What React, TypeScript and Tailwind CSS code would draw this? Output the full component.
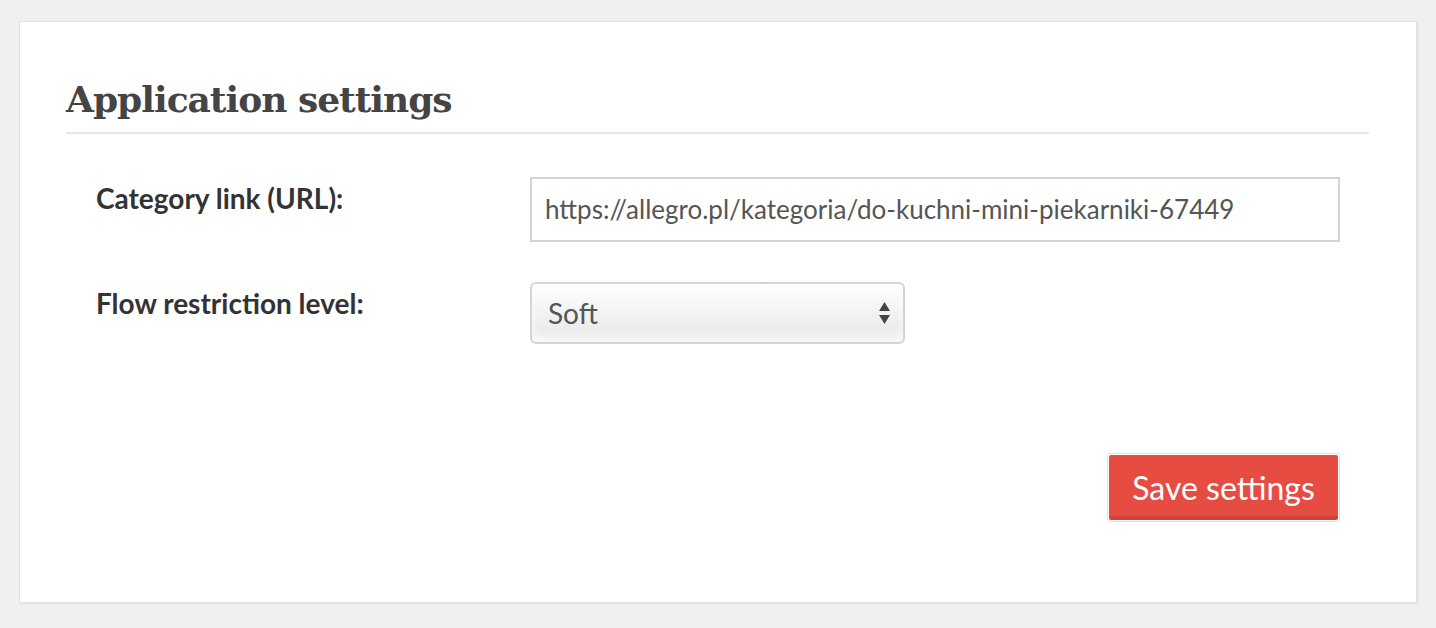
import React from "react";

export default function App() {
  return (
    <div className="w-[1436px] h-[628px] bg-[#f0f0f0] pt-[21px] pl-[19px]" style={{ fontFamily: "Lato, 'Open Sans', sans-serif" }}>
      <div className="w-[1398px] h-[582px] bg-white border border-[#e2e2e2] shadow-[1px_1px_2px_rgba(0,0,0,0.08)] pt-[50px] pl-[46px] pr-[47px] flex flex-col">
        <h1 className="text-[#444] text-[36px] font-bold leading-[54px] tracking-[-1px]" style={{ fontFamily: "'DejaVu Serif', 'Liberation Serif', serif" }}>
          Application settings
        </h1>
        <div className="border-b-2 border-[#e5e7e8] mt-[6px]" />
        <div className="flex flex-col pl-[30px] pr-[29px] mt-[43px]">
          <div className="flex items-start">
            <label className="w-[434px] text-[28px] font-bold text-[#333] leading-[42px]">Category link (URL):</label>
            <div className="w-[810px] h-[65px] border-2 border-[#d4d4d4] flex items-center px-[13px] text-[26px] text-[#555]">
              https://allegro.pl/kategoria/do-kuchni-mini-piekarniki-67449
            </div>
          </div>
          <div className="flex items-start mt-[40px]">
            <label className="w-[434px] text-[28px] font-bold text-[#333] leading-[42px]">Flow restriction level:</label>
            <div className="w-[375px] h-[62px] rounded-[6px] border-2 border-[#d4d4d4] bg-gradient-to-b from-[#ffffff] to-[#e6e6e6] flex items-center justify-between pl-[16px] pr-[12px] text-[28px] text-[#555] shadow-[inset_0_-6px_8px_rgba(255,255,255,0.8)]">
              <span>Soft</span>
              <svg width="13" height="24" viewBox="0 0 13 24">
                <path d="M6.5 1 L12 10 L1 10 Z" fill="#444" />
                <path d="M1 14 L12 14 L6.5 23 Z" fill="#444" />
              </svg>
            </div>
          </div>
          <div className="flex justify-end mt-[109px]">
            <button className="w-[233px] h-[69px] border border-[#e0e0e0] rounded-[3px] p-[1px] bg-white">
              <span className="block w-full h-full rounded-[2px] bg-[#e74c43] border-b-[4px] border-[#d0443c] text-white text-[32px] leading-[66px]">
                Save settings
              </span>
            </button>
          </div>
        </div>
      </div>
    </div>
  );
}
